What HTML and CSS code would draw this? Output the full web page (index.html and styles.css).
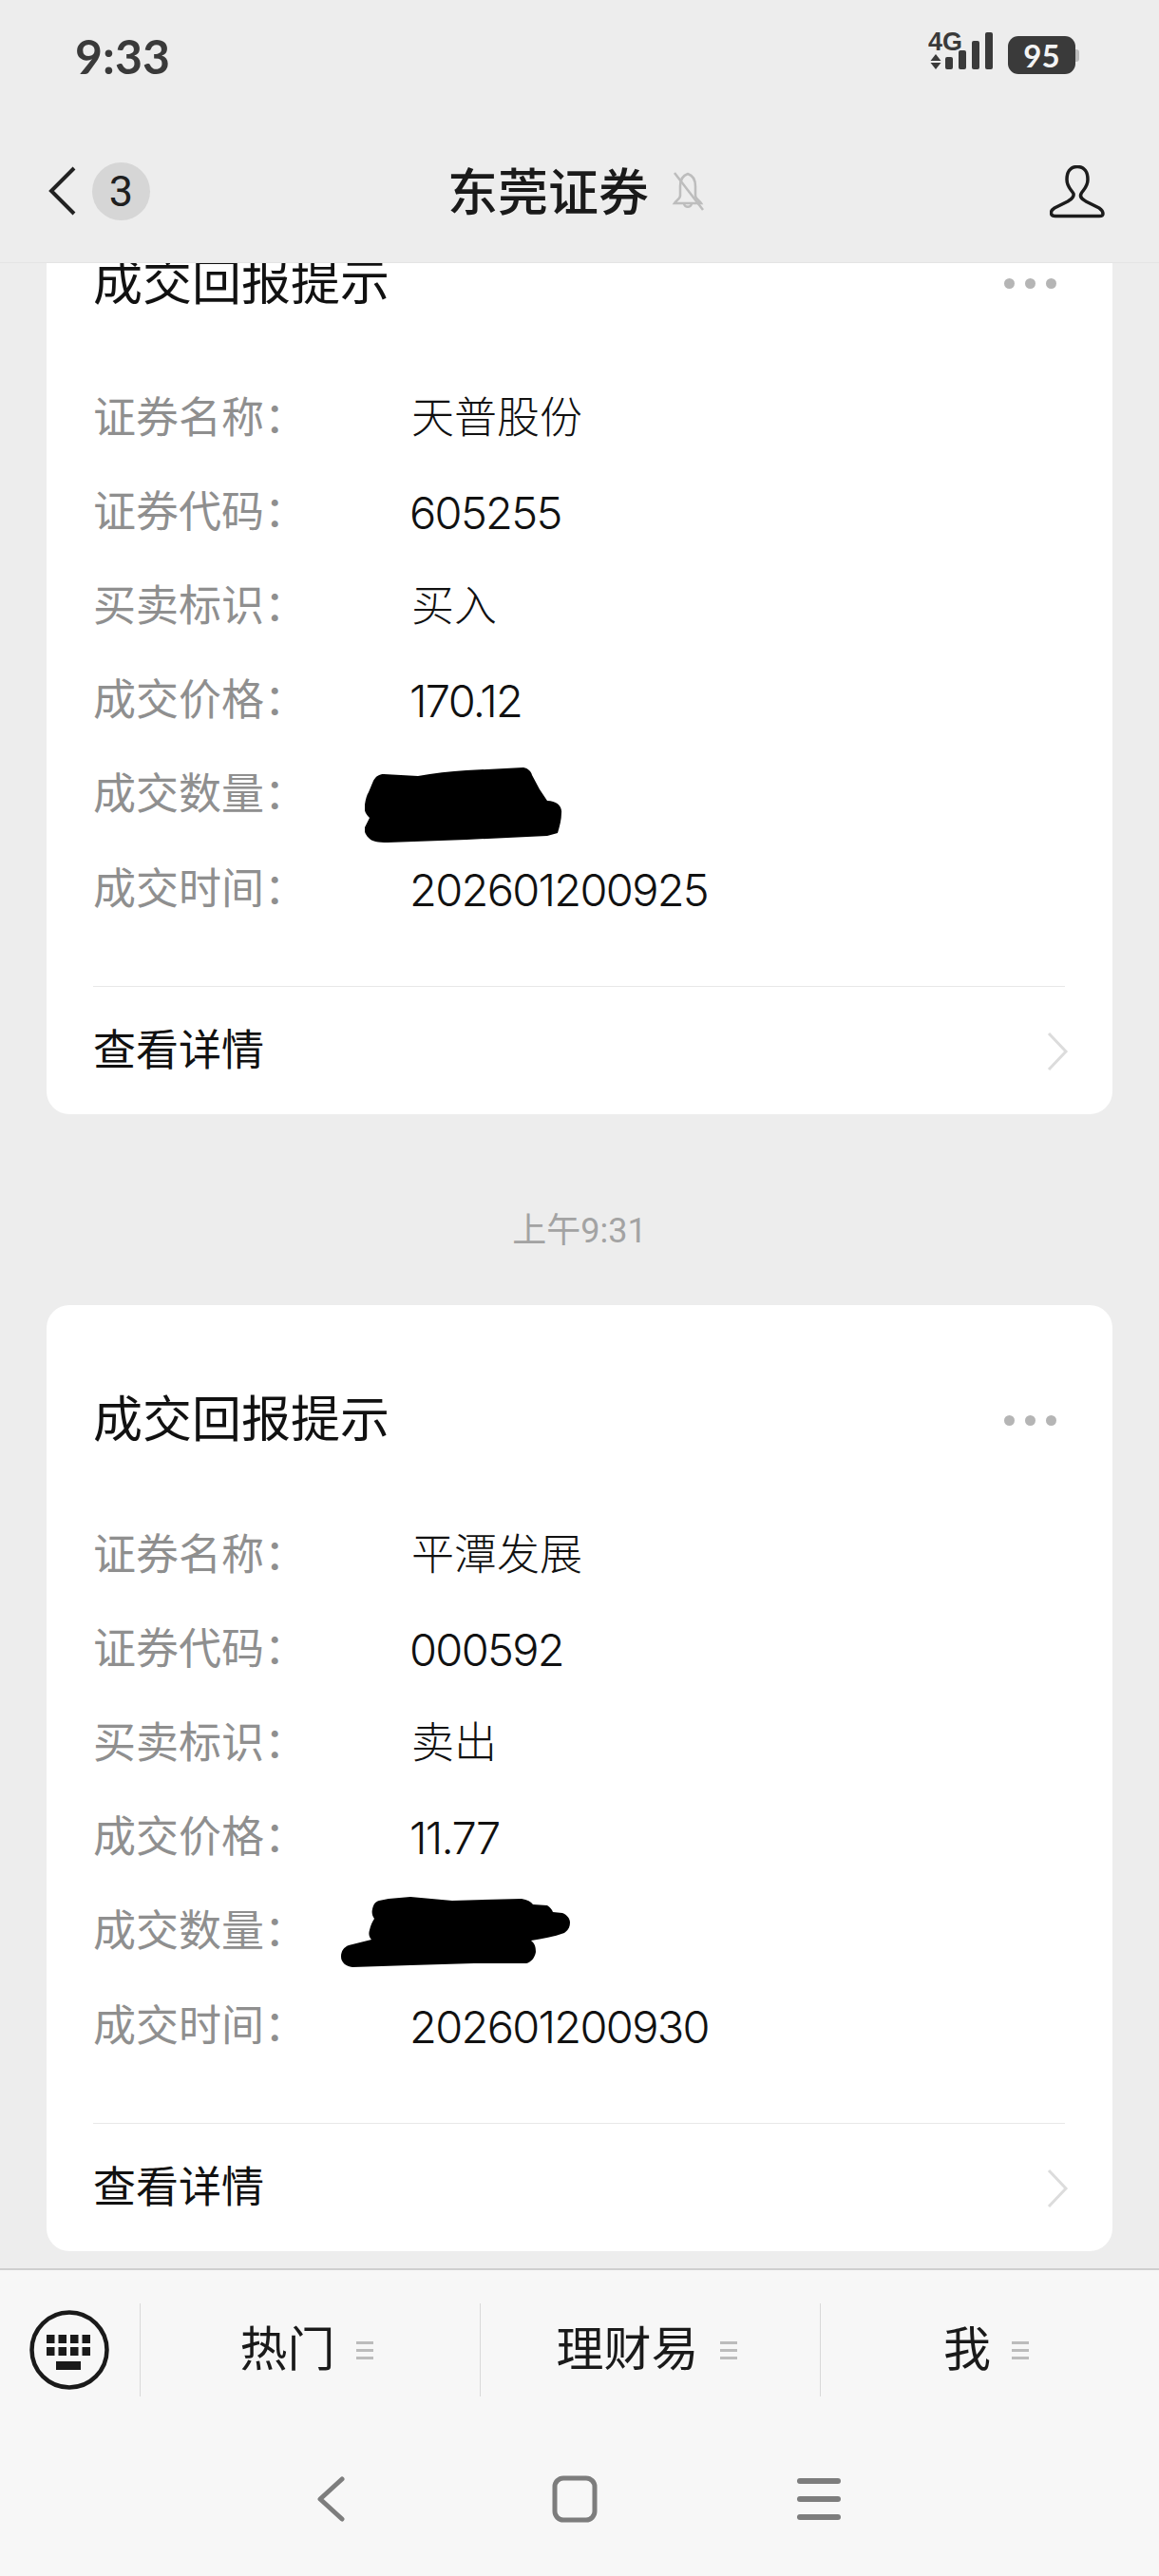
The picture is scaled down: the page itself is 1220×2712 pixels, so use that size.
FILE: index.html
```html
<!DOCTYPE html>
<html lang="zh-CN">
<head>
<meta charset="utf-8">
<title>东莞证券</title>
<link rel="stylesheet" href="styles.css">
</head>
<body>
<div class="screen">
  <header class="header">
    <div class="status">
      <span class="clock">9:33</span>
      <div class="status-icons">
        <svg class="signal" width="70" height="56" viewBox="0 -10 70 56">
          <text class="signal-text" x="0" y="20">4G</text>
          <path d="M2.500 31 L8 24 L13.500 31 Z M2.500 33 L13.500 33 L8 40 Z" fill="#3a3a3a"/>
          <rect x="18" y="27" width="8" height="13" rx="2" fill="#3a3a3a"/>
          <rect x="32" y="20" width="8" height="20" rx="2" fill="#3a3a3a"/>
          <rect x="46" y="10" width="8" height="30" rx="2" fill="#3a3a3a"/>
          <rect x="60" y="1" width="8" height="39" rx="2" fill="#3a3a3a"/>
        </svg>
        <div class="battery">95</div>
      </div>
    </div>
    <nav class="navbar">
      <div class="nav-left">
        <svg width="30" height="52" viewBox="0 0 30 52"><path d="M27 2 L3 26 L27 50" fill="none" stroke="#222" stroke-width="4"/></svg>
        <span class="unread">3</span>
      </div>
      <div class="nav-title">
        <span class="title-text">东莞证券</span>
        <svg width="38" height="42" viewBox="0 0 38 42">
          <path d="M19 3 C13 5 11 10 11 16 L11 26 C11 29 7 31 5 34 L33 34 C31 31 27 29 27 26 L27 16 C27 10 25 5 19 3 Z M15 34 C15 39 23 39 23 34" fill="none" stroke="#bdbdbd" stroke-width="2.500"/>
          <path d="M5 2 L35 41" stroke="#bdbdbd" stroke-width="2.500"/>
        </svg>
      </div>
      <div class="nav-right">
        <svg width="58" height="56" viewBox="0 0 58 56">
          <path d="M29 1.500 C21 1.500 18 8 18 15 C18 23 23 26 25 30 C26 34 22 36 19 38 L5 45 C2 47 1 49 1.500 51 C2 53 3 53.500 6 53.500 L52 53.500 C55 53.500 56 53 56 51 C56 49 55 47 52 45 L38 38 C35 36 31 34 33 30 C35 26 40 23 40 15 C40 8 37 1.500 29 1.500 Z" fill="none" stroke="#1c1c1c" stroke-width="3.500"/>
        </svg>
      </div>
    </nav>
  </header>

  <main class="messages">
    <article class="card card-scrolled">
      <div class="card-head">
        <h2 class="card-title">成交回报提示</h2>
        <div class="dots"><i></i><i></i><i></i></div>
      </div>
      <dl class="rows">
        <div class="row"><dt>证券名称：</dt><dd>天普股份</dd></div>
        <div class="row"><dt>证券代码：</dt><dd class="num">605255</dd></div>
        <div class="row"><dt>买卖标识：</dt><dd>买入</dd></div>
        <div class="row"><dt>成交价格：</dt><dd class="num">170.12</dd></div>
        <div class="row"><dt>成交数量：</dt><dd>
          <svg class="scribble scribble-a" width="208" height="80" viewBox="0 0 208 80"><path d="M20 7 L56 9 C72 6 90 4 107 3 L167 0 C172 1 175 4 176 8 L184 23 L192 35 C202 35 208 41 207 48 C207 55 205 62 203 69 L192 72 L107 76 L24 79 C14 79 7 78 4 74 C0 70 -1 66 0 63 L5 53 C0 48 -1 44 0 39 C1 33 2 29 4 26 L9 14 C12 9 15 7 20 7 Z"/></svg>
        </dd></div>
        <div class="row"><dt>成交时间：</dt><dd class="num">202601200925</dd></div>
      </dl>
      <div class="card-foot">
        <span class="foot-text">查看详情</span>
        <svg class="foot-chevron" width="24" height="42" viewBox="0 0 24 42"><path d="M3 2 L21 21 L3 40" fill="none" stroke="#dcdcdc" stroke-width="3"/></svg>
      </div>
    </article>

    <div class="time-label">上午9:31</div>

    <article class="card">
      <div class="card-head">
        <h2 class="card-title">成交回报提示</h2>
        <div class="dots"><i></i><i></i><i></i></div>
      </div>
      <dl class="rows">
        <div class="row"><dt>证券名称：</dt><dd>平潭发展</dd></div>
        <div class="row"><dt>证券代码：</dt><dd class="num">000592</dd></div>
        <div class="row"><dt>买卖标识：</dt><dd>卖出</dd></div>
        <div class="row"><dt>成交价格：</dt><dd class="num">11.77</dd></div>
        <div class="row"><dt>成交数量：</dt><dd>
          <svg class="scribble scribble-b" width="242" height="76" viewBox="0 0 242 76"><path d="M50 2 L73 0 L117 4 L190 2 C196 3 200 5 202 8 L217 9 C220 11 222 13 223 16 L233 17 C238 19 241 23 241 27 C241 32 239 35 235 38 C224 42 212 44 200 46 C204 49 205 53 205 58 C204 64 200 69 195 70 L140 70 L73 72 L12 74 C5 73 0 69 0 63 C0 57 3 53 8 51 L32 45 C29 42 29 38 30 35 C31 30 33 26 35 23 C33 20 32 17 33 13 C34 8 36 5 40 4 Z"/></svg>
        </dd></div>
        <div class="row"><dt>成交时间：</dt><dd class="num">202601200930</dd></div>
      </dl>
      <div class="card-foot">
        <span class="foot-text">查看详情</span>
        <svg class="foot-chevron" width="24" height="42" viewBox="0 0 24 42"><path d="M3 2 L21 21 L3 40" fill="none" stroke="#dcdcdc" stroke-width="3"/></svg>
      </div>
    </article>
  </main>

  <footer class="footer">
    <div class="menu-bar">
      <div class="kbd">
        <svg width="84" height="84" viewBox="0 0 84 84">
          <circle cx="42" cy="42" r="39.500" fill="none" stroke="#1a1a1a" stroke-width="4.500"/>
          <g fill="#1a1a1a">
            <rect x="18" y="26" width="8.500" height="9"/><rect x="30.500" y="26" width="8.500" height="9"/><rect x="43" y="26" width="8.500" height="9"/><rect x="55.500" y="26" width="8.500" height="9"/>
            <rect x="18" y="39" width="8.500" height="9"/><rect x="30.500" y="39" width="8.500" height="9"/><rect x="43" y="39" width="8.500" height="9"/><rect x="55.500" y="39" width="8.500" height="9"/>
            <rect x="28" y="54" width="26" height="9"/>
          </g>
        </svg>
      </div>
      <div class="tab"><span class="tab-label">热门</span><span class="lines"><i></i><i></i><i></i></span></div>
      <div class="tab"><span class="tab-label">理财易</span><span class="lines"><i></i><i></i><i></i></span></div>
      <div class="tab"><span class="tab-label">我</span><span class="lines"><i></i><i></i><i></i></span></div>
    </div>
    <div class="sys-nav">
      <div class="sys-item"><svg width="30" height="48" viewBox="0 0 30 48"><path d="M27 3 L4 24 L27 45" fill="none" stroke="#7d7d7d" stroke-width="5" stroke-linecap="round" stroke-linejoin="round"/></svg></div>
      <div class="sys-item"><svg width="48" height="50" viewBox="0 0 48 50"><rect x="3" y="3" width="42" height="44" rx="9" fill="none" stroke="#7d7d7d" stroke-width="5"/></svg></div>
      <div class="sys-item"><svg width="46" height="48" viewBox="0 0 46 48"><g fill="#7d7d7d"><rect y="2" width="46" height="6" rx="3"/><rect y="21" width="46" height="6" rx="3"/><rect y="40" width="46" height="6" rx="3"/></g></svg></div>
    </div>
  </footer>
</div>
</body>
</html>
```
FILE: styles.css
```css
* { box-sizing: border-box; }
html, body { margin: 0; padding: 0; }
body {
  background: #ededed;
  font-family: Roboto, "Noto Sans CJK SC", sans-serif;
  color: #1f1f1f;
}
.screen {
  width: 1220px;
  height: 2712px;
  display: flex;
  flex-direction: column;
  overflow: hidden;
}

/* Header */
.header {
  flex: 0 0 277px;
  background: #ededed;
  border-bottom: 1px solid #e4e4e4;
  position: relative;
  z-index: 2;
}
.status {
  height: 126px;
  padding: 34px 88px 0 79px;
  display: flex;
  justify-content: space-between;
  align-items: flex-start;
}
.clock {
  font-family: Lato, "Liberation Sans", sans-serif;
  font-size: 50px;
  line-height: 50px;
  font-weight: 700;
  color: #3a3a3a;
}
.status-icons {
  display: flex;
  align-items: flex-start;
  gap: 14px;
}
.signal { display: block; margin-top: -11px; }
.signal-text {
  font-family: "Liberation Sans", sans-serif;
  font-size: 27px;
  font-weight: 700;
  fill: #3a3a3a;
}
.battery {
  position: relative;
  margin-top: 4px;
  width: 71px;
  height: 40px;
  border-radius: 11px;
  background: #3a3a3a;
  color: #f4f4f4;
  font-family: Lato, "Liberation Sans", sans-serif;
  font-size: 33px;
  line-height: 40px;
  font-weight: 700;
  text-align: center;
}
.battery::after {
  content: "";
  position: absolute;
  right: -4px;
  top: 14px;
  width: 4px;
  height: 13px;
  border-radius: 0 3px 3px 0;
  background: #bdbdbd;
}
.navbar {
  height: 150px;
  padding: 0 57px 0 51px;
  display: grid;
  grid-template-columns: 1fr auto 1fr;
  align-items: center;
}
.nav-left { display: flex; align-items: center; gap: 16px; }
.nav-left svg { display: block; }
.unread {
  width: 61px;
  height: 61px;
  border-radius: 50%;
  background: #d6d6d6;
  color: #1f1f1f;
  font-size: 45px;
  line-height: 61px;
  text-align: center;
}
.nav-title { display: flex; align-items: center; gap: 22px; }
.title-text {
  font-size: 53px;
  line-height: 60px;
  font-weight: 500;
  color: #1a1a1a;
  padding-top: 5px;
}
.nav-right { display: flex; justify-content: flex-end; padding-top: 2px; }
.nav-right svg { display: block; }

/* Messages */
.messages {
  flex: 1 1 auto;
  min-height: 0;
  overflow: hidden;
  padding: 0 49px;
}
.card {
  height: 996px;
  background: #fff;
  border-radius: 24px;
  padding: 72px 50px 0 49px;
}
.card-scrolled { margin-top: -100px; }
.card-head {
  height: 100px;
  display: flex;
  align-items: center;
  justify-content: space-between;
  padding-right: 9px;
}
.card-title {
  margin: 0;
  font-size: 52px;
  line-height: 100px;
  font-weight: 400;
  color: #111;
}
.dots { display: flex; gap: 11px; margin-top: -2px; }
.dots i {
  width: 11px;
  height: 11px;
  border-radius: 50%;
  background: #b5b5b5;
}
.rows { margin: 42px 0 0; }
.row {
  height: 99.200px;
  display: flex;
  align-items: center;
}
.row dt {
  width: 335px;
  font-size: 45px;
  line-height: 60px;
  color: #8f8f8f;
  flex: none;
}
.row dd {
  margin: 0;
  font-size: 45px;
  line-height: 60px;
  font-weight: 300;
  color: #111;
  position: relative;
}
.row .num {
  font-family: Inter, Roboto, sans-serif;
  font-size: 47px;
  font-weight: 300;
  letter-spacing: -1.700px;
  margin-left: -2px;
  color: #111;
}
.scribble {
  position: absolute;
  fill: #000;
  display: block;
}
.scribble-a { left: -49px; top: -29px; }
.scribble-b { left: -74px; top: -37px; }
.card-foot {
  margin-top: 52px;
  height: 135px;
  border-top: 1.500px solid #e8e8e8;
  display: flex;
  align-items: center;
  justify-content: space-between;
  padding-top: 1px;
}
.foot-text {
  font-size: 45px;
  line-height: 60px;
  color: #111;
}
.foot-chevron { margin-right: -4px; display: block; }
.time-label {
  height: 201px;
  padding-top: 37px;
  display: flex;
  align-items: center;
  justify-content: center;
  font-size: 36px;
  color: #a3a3a3;
}

/* Footer */
.footer {
  flex: 0 0 324px;
  background: #f7f7f7;
  border-top: 2px solid #cfcfcf;
}
.menu-bar {
  height: 135px;
  padding-top: 35px;
  display: grid;
  grid-template-columns: 147px 358px 358px 1fr;
}
.kbd {
  display: flex;
  align-items: center;
  justify-content: center;
  padding-right: 1px;
  height: 98px;
}
.tab {
  height: 98px;
  border-left: 1.500px solid #d9d9d9;
  display: flex;
  align-items: center;
  justify-content: center;
  gap: 22px;
  padding-right: 8px;
}
.tab-label {
  font-size: 50px;
  line-height: 60px;
  color: #1a1a1a;
}
.lines {
  display: flex;
  flex-direction: column;
  gap: 5px;
}
.lines i {
  width: 18px;
  height: 3px;
  background: #bcbcbc;
}
.sys-nav {
  height: 187px;
  padding: 81px 10px 0 0;
  display: flex;
  justify-content: center;
}
.sys-item {
  width: 257px;
  height: 50px;
  display: flex;
  align-items: center;
  justify-content: center;
}
.sys-item svg { display: block; }
```
